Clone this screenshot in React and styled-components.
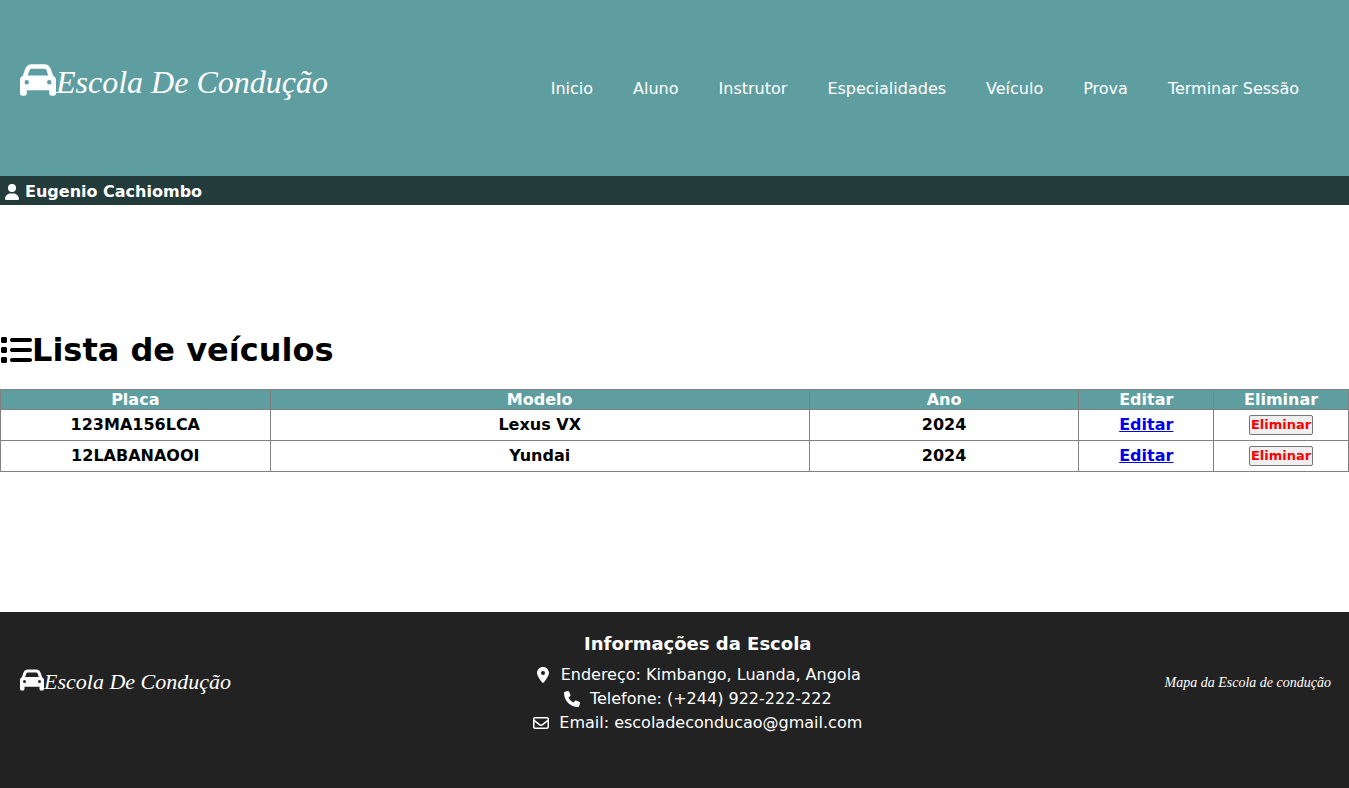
import React from "react";
import styled, { createGlobalStyle } from "styled-components";
import { FaCar, FaUser, FaList, FaLocationDot, FaPhone, FaRegEnvelope } from "react-icons/fa6";

const GlobalStyle = createGlobalStyle`
  * { box-sizing: border-box; margin: 0; padding: 0; }
  body { background: #fff; color: #000; font: 16px/20px Verdana, "DejaVu Sans", sans-serif; }
`;

const Page = styled.div`
  min-height: 100vh;
  display: flex;
  flex-direction: column;
`;

const Header = styled.header`
  display: flex;
  align-items: center;
  justify-content: space-between;
  min-height: 176px;
  padding: 0 50px 0 20px;
  background: #5f9ea0;
  color: #fff;
`;

const Brand = styled.a`
  display: flex;
  align-items: center;
  color: #fff;
  text-decoration: none;
  white-space: nowrap;
  font-size: ${(p) => (p.$small ? 24 : 36)}px;
  line-height: 1;
  padding-bottom: ${(p) => (p.$small ? 0 : 16)}px;
`;

const Wordmark = styled.span`
  padding-top: 4px;
  font-family: "Liberation Serif", serif;
  font-style: italic;
  font-size: ${(p) => (p.$small ? 22 : 32)}px;
`;

const Nav = styled.nav`
  display: flex;
  gap: 40px;
  padding-top: 2px;
`;

const NavLink = styled.a`
  color: #fff;
  text-decoration: none;
  white-space: nowrap;
`;

const UserBar = styled.div`
  display: flex;
  align-items: center;
  gap: 5px;
  height: 29px;
  padding: 2px 4px 0;
  background: #243b3c;
  color: #fff;
  font-weight: bold;
`;

const Main = styled.main`
  flex: 1;
  padding: 125px 0 140px;
`;

const Title = styled.h1`
  display: flex;
  align-items: center;
  margin-bottom: 19px;
  font-size: 32px;
  line-height: 40px;
`;

const Table = styled.table`
  width: 100%;
  table-layout: fixed;
  border-collapse: collapse;
  font-weight: bold;
  text-align: center;
`;

const HeadCell = styled.th`
  width: ${(p) => p.$width};
  height: 20px;
  border: 1px solid #808080;
  background: #5f9ea0;
  color: #fff;
  line-height: 19px;
`;

const Cell = styled.td`
  height: 31px;
  border: 1px solid #808080;
`;

const EditLink = styled.a`
  color: #0000ee;
`;

const DeleteButton = styled.button`
  display: block;
  margin: 0 auto;
  padding: 0 1px;
  border: 1px solid #767676;
  border-radius: 2px;
  background: #efefef;
  color: #f00;
  font: bold 13px/18px Verdana, "DejaVu Sans", sans-serif;
  cursor: pointer;
`;

const Footer = styled.footer`
  display: flex;
  justify-content: space-between;
  min-height: 176px;
  padding: 21px 18px 51px 20px;
  background: #222;
  color: #fff;
`;

const FooterSide = styled.div`
  display: flex;
  align-items: flex-start;
  padding-top: 34px;
`;

const MapLink = styled.a`
  color: #fff;
  font: italic 14px/32px "Liberation Serif", serif;
  text-decoration: none;
`;

const Contact = styled.address`
  font-style: normal;
  text-align: center;
`;

const ContactTitle = styled.h2`
  margin-bottom: 8px;
  font-size: 18px;
  line-height: 22px;
`;

const ContactLine = styled.p`
  display: flex;
  align-items: center;
  justify-content: center;
  gap: 10px;
  line-height: 24px;
`;

const links = ["Inicio", "Aluno", "Instrutor", "Especialidades", "Veículo", "Prova", "Terminar Sessão"];

const columns = [
  ["Placa", "20%"],
  ["Modelo", "40%"],
  ["Ano", "20%"],
  ["Editar", "10%"],
  ["Eliminar", "10%"],
];

const vehicles = [
  ["123MA156LCA", "Lexus VX", "2024"],
  ["12LABANAOOI", "Yundai", "2024"],
];

export default function App() {
  return (
    <Page>
      <GlobalStyle />
      <Header>
        <Brand href="#"><FaCar /><Wordmark>Escola De Condução</Wordmark></Brand>
        <Nav>
          {links.map((link) => <NavLink href="#" key={link}>{link}</NavLink>)}
        </Nav>
      </Header>
      <UserBar><FaUser />Eugenio Cachiombo</UserBar>
      <Main>
        <Title><FaList />Lista de veículos</Title>
        <Table>
          <thead>
            <tr>
              {columns.map(([name, width]) => <HeadCell $width={width} key={name}>{name}</HeadCell>)}
            </tr>
          </thead>
          <tbody>
            {vehicles.map(([plate, model, year]) => (
              <tr key={plate}>
                <Cell>{plate}</Cell>
                <Cell>{model}</Cell>
                <Cell>{year}</Cell>
                <Cell><EditLink href="#">Editar</EditLink></Cell>
                <Cell><DeleteButton type="button">Eliminar</DeleteButton></Cell>
              </tr>
            ))}
          </tbody>
        </Table>
      </Main>
      <Footer>
        <FooterSide>
          <Brand href="#" $small><FaCar /><Wordmark $small>Escola De Condução</Wordmark></Brand>
        </FooterSide>
        <Contact>
          <ContactTitle>Informações da Escola</ContactTitle>
          <ContactLine><FaLocationDot />Endereço: Kimbango, Luanda, Angola</ContactLine>
          <ContactLine><FaPhone />Telefone: (+244) 922-222-222</ContactLine>
          <ContactLine><FaRegEnvelope />Email: escoladeconducao@gmail.com</ContactLine>
        </Contact>
        <FooterSide>
          <MapLink href="#">Mapa da Escola de condução</MapLink>
        </FooterSide>
      </Footer>
    </Page>
  );
}
